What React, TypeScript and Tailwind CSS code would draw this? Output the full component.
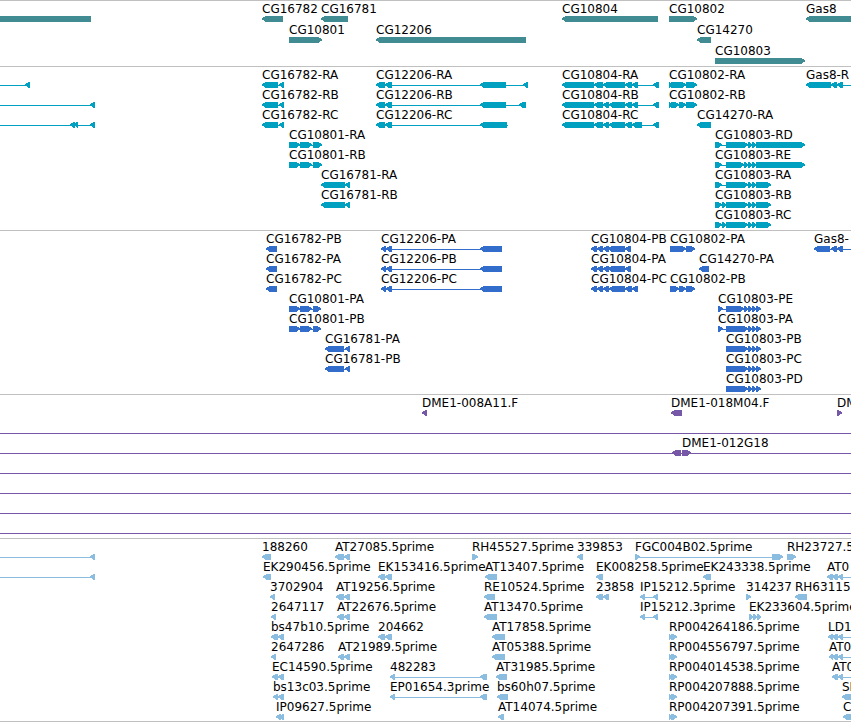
type Dir = 'left' | 'right';

interface Feature {
  name?: string;
  dir?: Dir;
  blocks: [number, number][];
  // where the connector line ends when it runs past the blocks
  from?: number;
  to?: number;
}

interface Track {
  id: string;
  color: string;
  rowGap?: string;
  linesFrom?: number;
  rows: Feature[][];
}

const L = (name: string, ...blocks: [number, number][]): Feature => ({ name, dir: 'left', blocks });
const R = (name: string, ...blocks: [number, number][]): Feature => ({ name, dir: 'right', blocks });
const fromEdge = (...blocks: [number, number][]): Feature => ({ dir: 'left', from: -20, blocks });
const toEdge = (name: string, ...blocks: [number, number][]): Feature => ({ name, dir: 'left', to: 4000, blocks });

const genes: Feature[][] = [
  [
    L('', [-20, 91]),
    L('CG16782', [262, 283]),
    L('CG16781', [321, 348]),
    L('CG10804', [562, 658]),
    R('CG10802', [669, 697]),
    L('Gas8', [806, 900]),
  ],
  [R('CG10801', [289, 322]), L('CG12206', [376, 526]), L('CG14270', [697, 711])],
  [R('CG10803', [715, 805])],
];

const transcripts: Feature[][] = [
  [
    fromEdge([25, 30]),
    L('CG16782-RA', [262, 278], [279, 284]),
    L('CG12206-RA', [376, 385], [385, 392], [480, 506], [523, 528]),
    L('CG10804-RA', [562, 594], [594, 603], [603, 625], [625, 632], [632, 638], [653, 659]),
    R('CG10802-RA', [669, 672], [671, 686], [686, 697]),
    toEdge('Gas8-R', [806, 831], [831, 837], [837, 843]),
  ],
  [
    fromEdge([90, 95]),
    L('CG16782-RB', [262, 278], [279, 284]),
    L('CG12206-RB', [376, 385], [385, 392], [480, 506], [519, 526]),
    L('CG10804-RB', [562, 594], [594, 603], [603, 609], [609, 625], [625, 632], [632, 638], [653, 659]),
    R('CG10802-RB', [669, 672], [671, 679], [679, 686], [686, 697]),
  ],
  [
    fromEdge([70, 75], [74, 78], [90, 95]),
    L('CG16782-RC', [262, 278], [279, 284]),
    { name: 'CG12206-RC', dir: 'left', to: 508, blocks: [[376, 385], [385, 392], [480, 507]] },
    L('CG10804-RC', [562, 594], [594, 603], [603, 609], [609, 625], [625, 632], [632, 642], [653, 659]),
    L('CG14270-RA', [697, 711]),
  ],
  [
    R('CG10801-RA', [289, 300], [300, 312], [313, 322]),
    R('CG10803-RD', [715, 722], [726, 748], [748, 752], [752, 756], [756, 805]),
  ],
  [
    R('CG10801-RB', [289, 300], [300, 312], [313, 322]),
    R('CG10803-RE', [715, 722], [726, 744], [744, 748], [748, 752], [752, 756], [756, 805]),
  ],
  [
    L('CG16781-RA', [321, 345], [345, 350]),
    R('CG10803-RA', [715, 722], [726, 748], [748, 752], [752, 756], [756, 771]),
  ],
  [
    L('CG16781-RB', [321, 345], [345, 350]),
    R('CG10803-RB', [715, 722], [722, 726], [726, 748], [748, 752], [752, 756], [756, 771]),
  ],
  [R('CG10803-RC', [715, 722], [722, 726], [726, 748], [748, 752], [752, 756], [756, 771])],
];

const proteins: Feature[][] = [
  [
    L('CG16782-PB', [266, 277]),
    L('CG12206-PA', [381, 386], [386, 392], [480, 502]),
    L('CG10804-PB', [591, 597], [597, 603], [603, 609], [608, 625], [625, 631]),
    R('CG10802-PA', [670, 686], [686, 695]),
    toEdge('Gas8-', [814, 830], [831, 837], [837, 843]),
  ],
  [
    L('CG16782-PA', [266, 277]),
    L('CG12206-PB', [381, 386], [386, 392], [480, 502]),
    L('CG10804-PA', [591, 597], [597, 603], [603, 609], [608, 625], [625, 631]),
    L('CG14270-PA', [699, 709]),
  ],
  [
    L('CG16782-PC', [266, 277]),
    L('CG12206-PC', [381, 386], [386, 392], [480, 502]),
    L('CG10804-PC', [591, 597], [597, 603], [603, 609], [609, 625], [625, 632], [632, 638]),
    R('CG10802-PB', [670, 679], [679, 686], [686, 695]),
  ],
  [
    R('CG10801-PA', [289, 300], [300, 312], [313, 321]),
    R('CG10803-PE', [718, 723], [726, 744], [744, 748], [748, 752], [752, 756], [756, 761]),
  ],
  [
    R('CG10801-PB', [289, 300], [300, 312], [313, 321]),
    R('CG10803-PA', [718, 723], [726, 748], [748, 752], [752, 756], [756, 761]),
  ],
  [
    L('CG16781-PA', [325, 344], [345, 350]),
    R('CG10803-PB', [726, 748], [748, 752], [752, 756], [756, 761]),
  ],
  [
    L('CG16781-PB', [325, 344], [345, 350]),
    R('CG10803-PC', [726, 748], [748, 752], [752, 756], [756, 761]),
  ],
  [R('CG10803-PD', [726, 748], [748, 752], [752, 756], [756, 761])],
];

const clones: Feature[][] = [
  [L('DME1-008A11.F', [422, 427]), L('DME1-018M04.F', [671, 682]), R('DM', [837, 842])],
  [],
  [L('', [672, 681]), R('DME1-012G18', [682, 691])],
  [],
  [],
  [],
  [],
];

const ests: Feature[][] = [
  [
    fromEdge([90, 95]),
    L('188260', [262, 271]),
    L('AT27085.5prime', [335, 344], [344, 350]),
    R('RH45527.5prime', [472, 478]),
    L('339853', [577, 583]),
    R('FGC004B02.5prime', [635, 640], [772, 783]),
    R('RH23727.5', [787, 796]),
  ],
  [
    fromEdge([90, 95]),
    L('EK290456.5prime', [263, 271]),
    L('EK153416.5prime', [378, 385], [385, 392]),
    L('AT13407.5prime', [485, 497]),
    L('EK008258.5prime', [596, 603]),
    L('EK243338.5prime', [703, 711]),
    toEdge('AT0', [827, 833], [832, 838], [838, 843]),
  ],
  [
    L('3702904', [270, 275]),
    L('AT19256.5prime', [336, 344], [344, 350]),
    L('RE10524.5prime', [484, 495]),
    L('23858', [596, 603], [603, 609]),
    L('IP15212.5prime', [640, 645], [653, 658]),
    R('314237', [746, 751]),
    L('RH63115', [795, 807]),
  ],
  [
    L('2647117', [271, 276]),
    L('AT22676.5prime', [337, 344], [344, 350]),
    L('AT13470.5prime', [484, 497]),
    L('IP15212.3prime', [640, 645], [653, 658]),
    R('EK233604.5prime', [749, 753], [753, 757], [757, 761]),
  ],
  [
    L('bs47b10.5prime', [271, 278], [278, 284]),
    L('204662', [378, 385], [385, 392]),
    L('AT17858.5prime', [492, 505]),
    R('RP004264186.5prime', [669, 672], [671, 677]),
    toEdge('LD1', [828, 833], [832, 838], [838, 843]),
  ],
  [
    L('2647286', [271, 276]),
    L('AT21989.5prime', [338, 344], [344, 350]),
    L('AT05388.5prime', [492, 505]),
    R('RP004556797.5prime', [669, 672], [671, 677]),
    toEdge('AT0', [829, 833], [832, 838], [838, 843]),
  ],
  [
    L('EC14590.5prime', [272, 278], [278, 284]),
    L('482283', [390, 395], [480, 487]),
    L('AT31985.5prime', [496, 507]),
    R('RP004014538.5prime', [669, 672], [671, 677]),
    toEdge('AT0', [832, 838], [838, 843]),
  ],
  [
    L('bs13c03.5prime', [273, 278], [278, 284]),
    L('EP01654.3prime', [390, 395], [480, 487]),
    L('bs60h07.5prime', [497, 508]),
    R('RP004207888.5prime', [669, 672], [671, 677]),
    L('SD', [842, 900]),
  ],
  [
    L('IP09627.5prime', [276, 281], [279, 284]),
    L('AT14074.5prime', [498, 504]),
    R('RP004207391.5prime', [669, 672], [671, 677]),
    L('C', [843, 900]),
  ],
];

const tracks: Track[] = [
  { id: 'genes', color: 'text-[#418c93]', rowGap: 'gap-px', rows: genes },
  { id: 'transcripts', color: 'text-[#00a0c0]', rows: transcripts },
  { id: 'proteins', color: 'text-[#326dcb]', rows: proteins },
  { id: 'clones', color: 'text-[#7657a8]', linesFrom: 1, rows: clones },
  { id: 'ests', color: 'text-[#8abddf]', rows: ests },
];

function arrow([start, end]: [number, number], dir?: Dir) {
  const tip = Math.min(5, end - start);
  if (dir === 'right') {
    return `${start},0 ${end - tip + 1},0 ${end},2.4 ${end},3 ${end - tip + 1},6 ${start},6`;
  }
  return `${end},0 ${start + tip - 1},0 ${start},2.4 ${start},3 ${start + tip - 1},6 ${end},6`;
}

function Glyph({ feature }: { feature: Feature }) {
  const { blocks, dir } = feature;
  const from = feature.from ?? blocks[0][0];
  const to = feature.to ?? blocks[blocks.length - 1][1];
  return (
    <g>
      <rect x={from} y={3} width={to - from} height={1} />
      {blocks.map((b, i) => (
        <polygon key={i} points={arrow(b, dir)} />
      ))}
    </g>
  );
}

function Row({ features, line }: { features: Feature[]; line: boolean }) {
  return (
    <div>
      <div className="relative h-[14px] text-black">
        {features.filter(f => f.name).map(f => (
          <span key={f.blocks[0][0]} className="absolute top-0 whitespace-nowrap" style={{ left: f.blocks[0][0] }}>
            {f.name}
          </span>
        ))}
      </div>
      <svg className="block w-full h-[6px]" fill="currentColor" shapeRendering="crispEdges" aria-hidden="true">
        {line && <rect x="0" y="3" width="100%" height="1" />}
        {features.map((f, i) => <Glyph key={i} feature={f} />)}
      </svg>
    </div>
  );
}

export default function App() {
  return (
    <main className="w-full overflow-hidden bg-white border-b border-[#c0c0c0] font-['DejaVu_Sans',sans-serif] text-[12px] leading-[14px]">
      {tracks.map(track => (
        <section key={track.id} className={`border-t border-[#c0c0c0] pt-px pb-0.5 last:pb-px ${track.color}`}>
          <div className={`flex flex-col ${track.rowGap ?? ''}`}>
            {track.rows.map((features, i) => (
              <Row key={i} features={features} line={track.linesFrom !== undefined && i >= track.linesFrom} />
            ))}
          </div>
        </section>
      ))}
    </main>
  );
}
